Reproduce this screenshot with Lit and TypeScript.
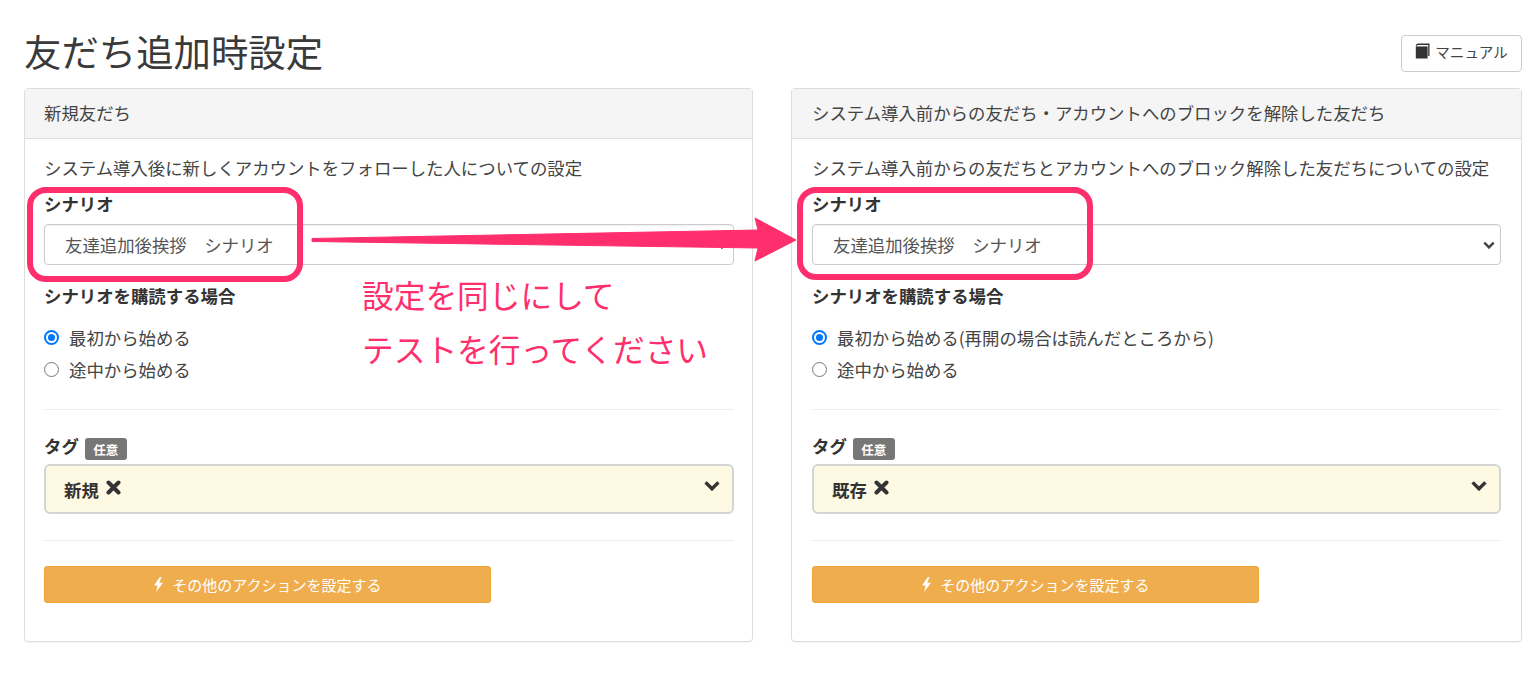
import { LitElement, html, css, svg } from "lit";
import { customElement } from "lit/decorators.js";

interface Col {
  head: string;
  desc: string;
  radio: string;
  tag: string;
}
const COLS: Col[] = [
  {
    head: "新規友だち",
    desc: "システム導入後に新しくアカウントをフォローした人についての設定",
    radio: "最初から始める",
    tag: "新規",
  },
  {
    head: "システム導入前からの友だち・アカウントへのブロックを解除した友だち",
    desc: "システム導入前からの友だちとアカウントへのブロック解除した友だちについての設定",
    radio: "最初から始める(再開の場合は読んだところから)",
    tag: "既存",
  },
];

const chevron = (cls: string) => html`<svg class=${cls} viewBox="0 0 16 11"><path d="M1.6 2.4 8 8.8l6.4-6.4" fill="none" stroke="currentColor" stroke-width="3.4"/></svg>`;

@customElement("app-root")
export class AppRoot extends LitElement {
  static styles = css`
    :host {
      display: block;
      position: relative;
      width: 1536px;
      height: 673px;
      overflow: hidden;
      box-sizing: border-box;
      padding: 0 14px 0 24px;
      background: #fff;
      color: #333;
      font-family: "Noto Sans CJK JP", "Liberation Sans", sans-serif;
      font-size: 17.4px;
    }
    .top {
      height: 88px;
      display: flex;
      justify-content: space-between;
      align-items: flex-start;
    }
    h1 {
      margin: 27px 0 0;
      font-size: 37.4px;
      line-height: 48px;
      font-weight: 400;
      color: #3a3a3a;
    }
    .manual {
      margin-top: 35px;
      width: 121px;
      height: 37px;
      box-sizing: border-box;
      border: 1px solid #ccc;
      border-radius: 4px;
      background: #fff;
      display: flex;
      align-items: center;
      justify-content: center;
      gap: 5px;
      padding-bottom: 5px;
      font-size: 14.6px;
      color: #444;
    }
    .manual svg { width: 15px; height: 16px; }
    .cols {
      display: grid;
      grid-template-columns: 729px 731px;
      gap: 38px;
    }
    .panel {
      height: 554px;
      box-sizing: border-box;
      border: 1px solid #ddd;
      border-radius: 4px;
      box-shadow: 0 1px 1px rgba(0, 0, 0, 0.05);
    }
    .head {
      height: 50px;
      box-sizing: border-box;
      padding: 0 19px 2px;
      display: flex;
      align-items: center;
      background: #f5f5f5;
      border-bottom: 1px solid #ddd;
      color: #444;
    }
    .panel:nth-child(2) .head { padding: 0 20px 2px; }
    .body { padding: 0 18px 0 19px; }
    .panel:nth-child(2) .body { padding: 0 20px; }
    .desc { height: 42px; display: flex; align-items: flex-end; line-height: 24px; white-space: nowrap; color: #444; }
    .desc span { position: relative; top: -1px; }
    .label { font-weight: 700; line-height: 24px; margin-top: 11px; color: #333; }
    .select {
      margin-top: 8px;
      height: 41px;
      box-sizing: border-box;
      border: 1px solid #ccc;
      border-radius: 4px;
      display: flex;
      align-items: center;
      justify-content: space-between;
      padding: 0 5px 0 20px;
      color: #555;
      box-shadow: inset 0 1px 1px rgba(0, 0, 0, 0.06);
    }
    .sel-chev { width: 12px; height: 8px; color: #444; }
    .label.second { margin-top: 19px; }
    .radios { margin-top: 17px; display: flex; flex-direction: column; gap: 8px; }
    .radio { display: flex; align-items: center; gap: 10px; height: 24px; color: #444; }
    .dot {
      width: 15px;
      height: 15px;
      box-sizing: border-box;
      border-radius: 50%;
      border: 1px solid #767676;
      background: #fff;
    }
    .dot.on {
      border: 2px solid #0075ff;
      padding: 2px;
      background: #0075ff content-box;
    }
    hr { border: 0; border-top: 1px solid #eee; margin: 0; }
    hr.a { margin-top: 28px; }
    .tagline { margin-top: 23px; display: flex; align-items: center; gap: 6px; height: 24px; font-weight: 700; }
    .badge {
      background: #777;
      color: #fff;
      border-radius: 3px;
      font-size: 12.5px;
      font-weight: 700;
      width: 42px;
      height: 22px;
      display: flex;
      align-items: center;
      justify-content: center;
      position: relative;
      top: 4px;
    }
    .tagbox {
      margin-top: 7px;
      height: 50px;
      box-sizing: border-box;
      border: 2px solid #d4d4d4;
      border-radius: 6px;
      background: #fef9e2;
      display: flex;
      align-items: center;
      justify-content: space-between;
      padding: 0 12px 0 18px;
    }
    .tagval { display: flex; align-items: center; gap: 7px; font-weight: 700; color: #333; }
    .x { width: 15px; height: 15px; position: relative; top: -2px; }
    .tag-chev { width: 16px; height: 11px; color: #333; position: relative; top: -4px; }
    hr.b { margin-top: 26px; }
    .btn {
      margin-top: 25px;
      width: 447px;
      height: 37px;
      box-sizing: border-box;
      background: #f0ad4e;
      border: 1px solid #eea236;
      border-radius: 3px;
      color: #fff;
      display: flex;
      align-items: center;
      justify-content: center;
      gap: 8px;
      font-size: 15px;
    }
    .btn svg { width: 11px; height: 15px; }
    .note {
      position: absolute;
      left: 362px;
      color: #ff2e6c;
      font-size: 31.7px;
      line-height: 40px;
      white-space: nowrap;
    }
    .note.one { top: 274px; }
    .note.two { top: 328px; }
    .overlay { position: absolute; inset: 0; width: 1536px; height: 673px; pointer-events: none; }
  `;

  private col(c: Col) {
    return html`<section class="panel">
      <div class="head">${c.head}</div>
      <div class="body">
        <div class="desc"><span>${c.desc}</span></div>
        <div class="label">シナリオ</div>
        <div class="select"><span>友達追加後挨拶　シナリオ</span>${chevron("sel-chev")}</div>
        <div class="label second">シナリオを購読する場合</div>
        <div class="radios">
          <div class="radio"><span class="dot on"></span>${c.radio}</div>
          <div class="radio"><span class="dot"></span>途中から始める</div>
        </div>
        <hr class="a" />
        <div class="tagline">タグ<span class="badge">任意</span></div>
        <div class="tagbox">
          <span class="tagval">${c.tag}
            <svg class="x" viewBox="0 0 15 15"><path d="M2.5 2.5 12.5 12.5M12.5 2.5 2.5 12.5" stroke="#333" stroke-width="4" stroke-linecap="round"/></svg>
          </span>
          ${chevron("tag-chev")}
        </div>
        <hr class="b" />
        <div class="btn">
          <svg viewBox="0 0 11 15"><path d="M6.8 0 1 8.4h3.6L3 15l7-9.2H6.2L8.6 0z" fill="#fff"/></svg>
          <span>その他のアクションを設定する</span>
        </div>
      </div>
    </section>`;
  }

  render() {
    return html`
      <div class="top">
        <h1>友だち追加時設定</h1>
        <div class="manual">
          <svg viewBox="0 0 15 16"><path d="M3 0.5H14.5V13H13.2V2H3.6C2.6 2 1.8 2.5 1.2 3.2L0.8 3C1 1.5 1.8 .5 3 .5z" fill="#333"/><path d="M0.8 3.4H12.6V15.5H0.8z" fill="#333"/></svg>
          <span>マニュアル</span>
        </div>
      </div>
      <div class="cols">${COLS.map((c) => this.col(c))}</div>
      <svg class="overlay" viewBox="0 0 1536 673">
        ${svg`<rect x="30" y="190" width="270" height="89" rx="16" fill="none" stroke="#ff2e6c" stroke-width="6"/>
        <rect x="800" y="190" width="290" height="87" rx="16" fill="none" stroke="#ff2e6c" stroke-width="6"/>
        <path d="M312 238.5 L758 230 L755 218 L796 240 L755 261 L758 248 L312 241.5 Z" fill="#ff2e6c" stroke="#ff2e6c" stroke-width="1" stroke-linejoin="round"/>`}
      </svg>
      <div class="note one">設定を同じにして</div>
      <div class="note two">テストを行ってください</div>
    `;
  }
}
